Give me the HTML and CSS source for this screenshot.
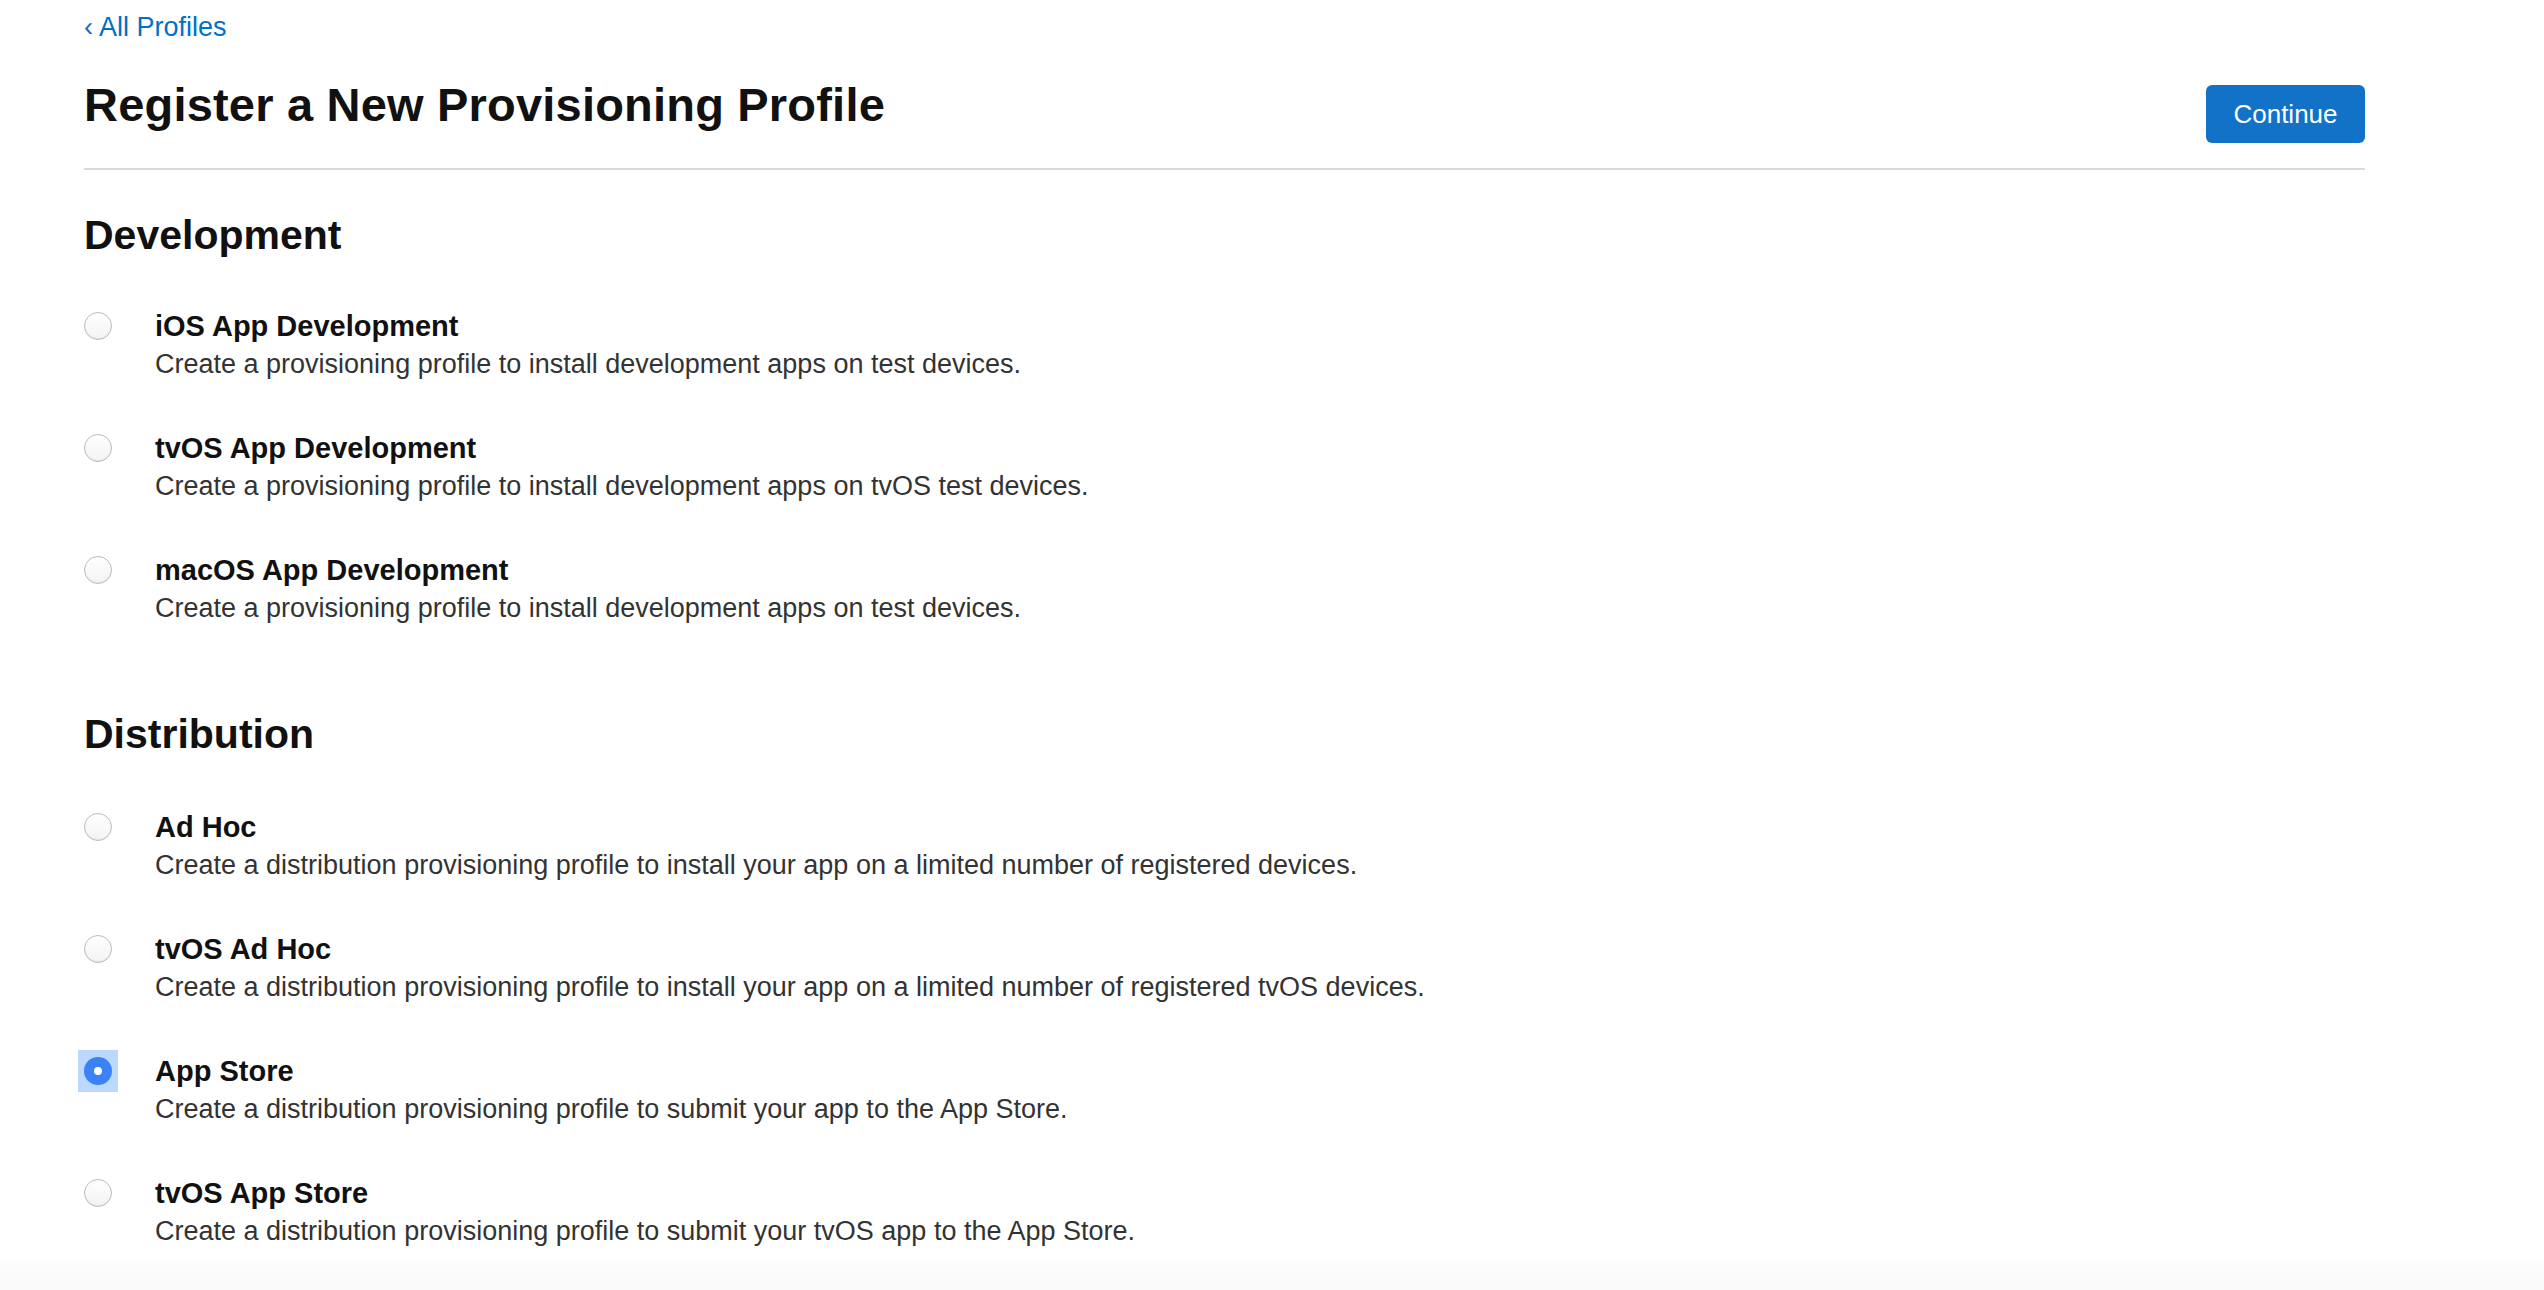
FILE: index.html
```html
<!DOCTYPE html>
<html lang="en">
<head>
    <meta charset="UTF-8">
    <meta name="viewport" content="width=device-width, initial-scale=1.0">
    <title>Register a New Provisioning Profile</title>
    <link rel="stylesheet" href="styles.css">
</head>
<body>
    <main class="page">
        <a class="back-link" href="#">&lsaquo; All Profiles</a>
        <div class="page-header">
            <h1>Register a New Provisioning Profile</h1>
            <button class="btn-primary" type="button">Continue</button>
        </div>

        <section class="group">
            <h2>Development</h2>
            <label class="option">
                <span class="radio"></span>
                <span class="option-text">
                    <span class="option-title">iOS App Development</span>
                    <span class="option-desc">Create a provisioning profile to install development apps on test devices.</span>
                </span>
            </label>
            <label class="option">
                <span class="radio"></span>
                <span class="option-text">
                    <span class="option-title">tvOS App Development</span>
                    <span class="option-desc">Create a provisioning profile to install development apps on tvOS test devices.</span>
                </span>
            </label>
            <label class="option">
                <span class="radio"></span>
                <span class="option-text">
                    <span class="option-title">macOS App Development</span>
                    <span class="option-desc">Create a provisioning profile to install development apps on test devices.</span>
                </span>
            </label>
        </section>

        <section class="group">
            <h2>Distribution</h2>
            <label class="option">
                <span class="radio"></span>
                <span class="option-text">
                    <span class="option-title">Ad Hoc</span>
                    <span class="option-desc">Create a distribution provisioning profile to install your app on a limited number of registered devices.</span>
                </span>
            </label>
            <label class="option">
                <span class="radio"></span>
                <span class="option-text">
                    <span class="option-title">tvOS Ad Hoc</span>
                    <span class="option-desc">Create a distribution provisioning profile to install your app on a limited number of registered tvOS devices.</span>
                </span>
            </label>
            <label class="option">
                <span class="radio checked"></span>
                <span class="option-text">
                    <span class="option-title">App Store</span>
                    <span class="option-desc">Create a distribution provisioning profile to submit your app to the App Store.</span>
                </span>
            </label>
            <label class="option">
                <span class="radio"></span>
                <span class="option-text">
                    <span class="option-title">tvOS App Store</span>
                    <span class="option-desc">Create a distribution provisioning profile to submit your tvOS app to the App Store.</span>
                </span>
            </label>
        </section>
    </main>
    <footer class="page-footer"></footer>
</body>
</html>
```

FILE: styles.css
```css
body {
    font-family: "Liberation Sans", Arial, sans-serif;
    margin: 0;
    padding: 0;
    background-color: #fff;
    color: #111;
    -webkit-font-smoothing: antialiased;
}
.page {
    width: 2281px;
    margin-left: 84px;
    height: 1262px;
}
.back-link {
    display: block;
    padding-top: 10px;
    font-size: 27px;
    line-height: 34px;
    color: #0070c9;
    text-decoration: none;
}
.page-header {
    display: flex;
    justify-content: space-between;
    align-items: flex-end;
    margin-top: 31px;
    border-bottom: 2px solid #dadada;
    padding-bottom: 25px;
}
.page-header h1 {
    margin: 0;
    font-size: 47px;
    line-height: 60px;
    font-weight: bold;
    letter-spacing: 0.2px;
    color: #111;
    padding-bottom: 8px;
}
.btn-primary {
    width: 159px;
    height: 58px;
    background-color: #1172c7;
    color: #fff;
    border: none;
    border-radius: 6px;
    font-family: inherit;
    font-size: 26px;
    cursor: pointer;
}
.group h2 {
    margin: 0;
    padding-top: 40px;
    font-size: 41px;
    line-height: 50px;
    font-weight: bold;
    color: #111;
}
.group + .group h2 {
    padding-top: 36px;
}
.group h2 + .option {
    margin-top: 47px;
}
.group + .group h2 + .option {
    margin-top: 49px;
}
.option {
    display: flex;
    gap: 43px;
    margin-bottom: 46px;
    cursor: pointer;
}
.radio {
    flex: none;
    width: 26px;
    height: 26px;
    margin-top: 5px;
    border: 1px solid #bcbcbc;
    border-radius: 50%;
    background: linear-gradient(#fff, #f3f3f3);
    box-shadow: inset 0 -1px 1px rgba(0, 0, 0, 0.06);
    position: relative;
}
.radio.checked {
    width: 28px;
    height: 28px;
    border: none;
    background: #3a83f6;
    box-shadow: none;
}
.radio.checked::before {
    content: "";
    position: absolute;
    left: -6px;
    top: -7px;
    right: -6px;
    bottom: -7px;
    background: #bcd9fd;
    z-index: -1;
}
.radio.checked::after {
    content: "";
    position: absolute;
    left: 10px;
    top: 10px;
    width: 8px;
    height: 8px;
    border-radius: 50%;
    background: #fff;
}
.option-text {
    display: flex;
    flex-direction: column;
}
.option-title {
    font-size: 29px;
    line-height: 38px;
    font-weight: bold;
    color: #111;
}
.option-desc {
    font-size: 27px;
    line-height: 38px;
    color: #333;
}
.page-footer {
    height: 28px;
    background: linear-gradient(#fdfdfd, #f9f9f9);
}
```
